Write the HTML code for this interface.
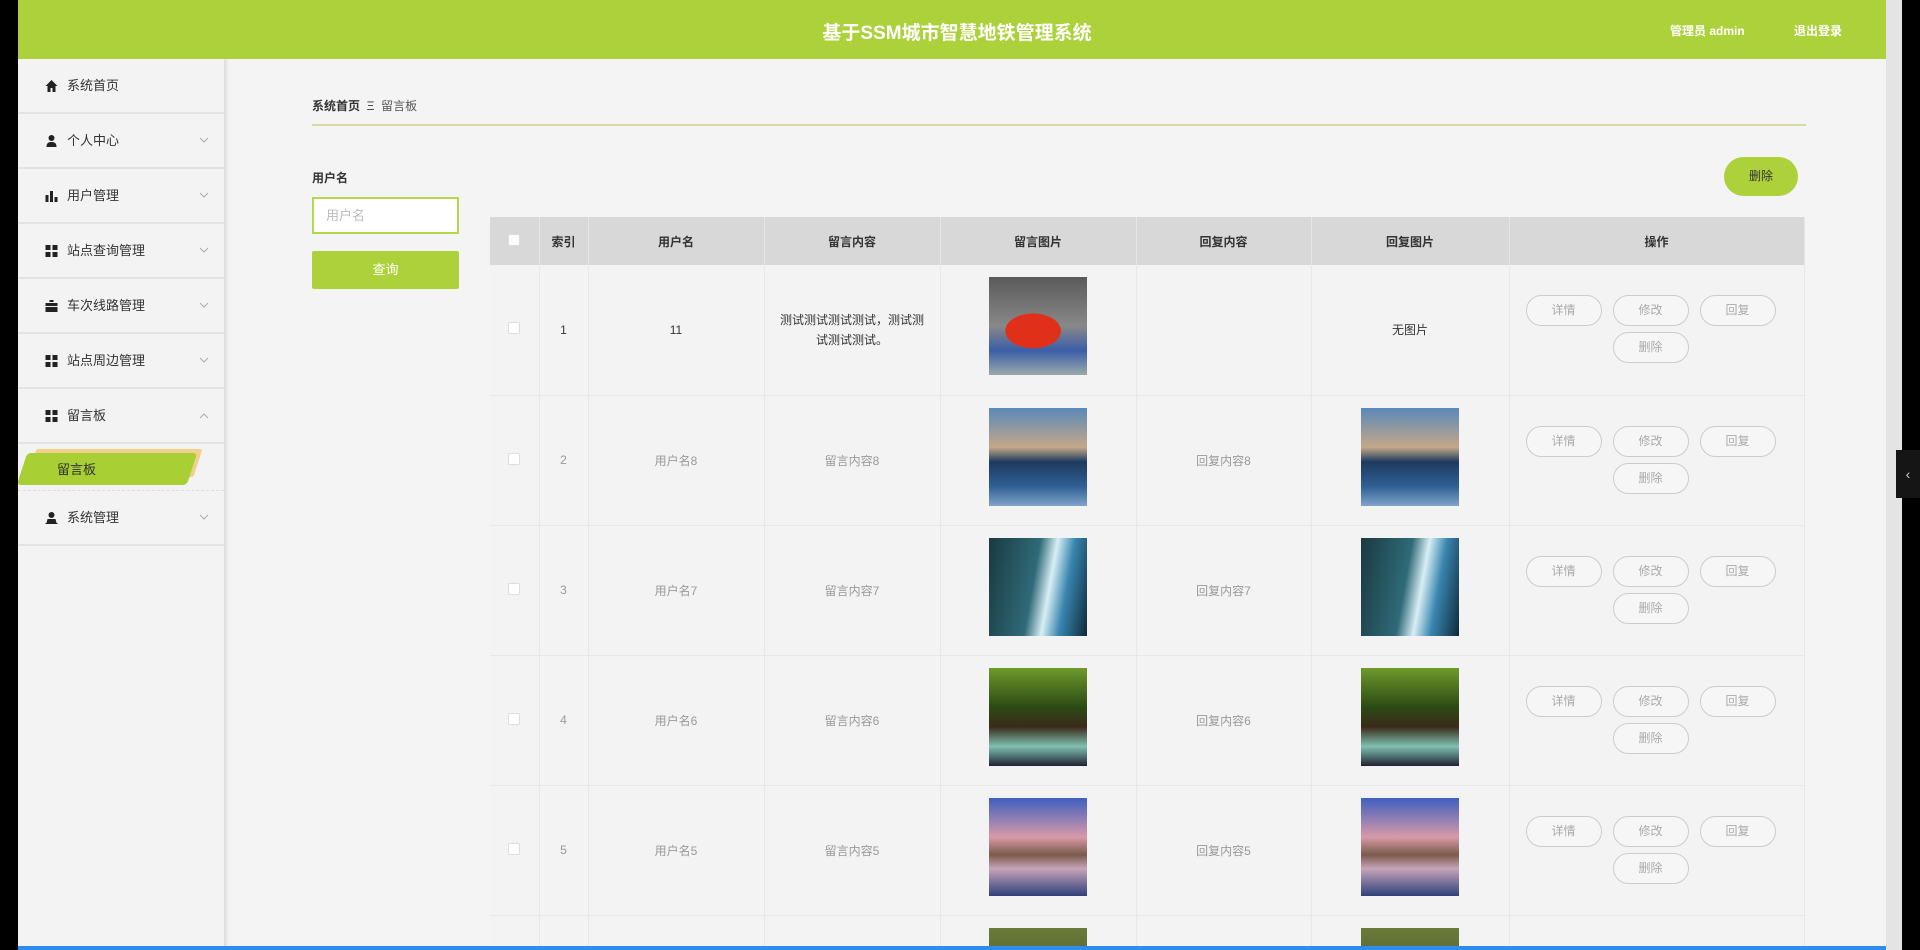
<!DOCTYPE html>
<html><head><meta charset="utf-8"><style>
*{margin:0;padding:0;box-sizing:border-box}
body{width:1920px;height:950px;overflow:hidden;background:#000;font-family:"Liberation Sans","Noto Sans CJK SC",sans-serif;position:relative}
.page{position:absolute;left:18px;top:0;width:1868px;height:950px;background:#f4f4f4;overflow:hidden}
.hd{position:absolute;left:0;top:0;width:1868px;height:59px;background:#acd13a;color:#fff;z-index:2}
.hd .t{position:absolute;left:0;width:1878px;text-align:center;top:18px;font-size:19px;font-weight:bold}
.hd .r{position:absolute;top:22px;font-size:12px;font-weight:bold}
.sb{position:absolute;left:0;top:59px;width:206px;height:891px;background:#f3f3f3;box-shadow:2px 0 4px rgba(0,0,0,.12);z-index:1}
.it{height:55px;border-bottom:2px solid #e3e3e3;position:relative;font-size:13px;color:#333;line-height:53px;padding-left:49px}
.it .ic{position:absolute;left:27px;top:21px;width:13px;height:12px}
.it .ar{position:absolute;left:181px;top:23px;width:10px;height:7px}
.sub{height:47px;position:relative;border-bottom:1px dashed #ddd}
.sub .g{position:absolute;left:4px;top:9px;width:170px;height:32px;background:#a8cf34;transform:skewX(-18deg);border-radius:4px;box-shadow:6px -6px 0 -2px #f1d08a}
.sub span{position:absolute;left:39px;top:15px;font-size:13px;color:#333}
.bc{position:absolute;left:294px;top:97px;font-size:12px;color:#333}
.line{position:absolute;left:294px;top:124px;width:1494px;height:2px;background:#d6dba0}
.lab{position:absolute;left:294px;top:169px;font-size:12px;color:#333;font-weight:bold}
.inp{position:absolute;left:294px;top:197px;width:147px;height:37px;border:2px solid #b4d84a;background:#fff;color:#bbb;font-size:13px;line-height:33px;padding-left:12px}
.btn{position:absolute;left:294px;top:251px;width:147px;height:38px;background:#acd13a;color:#fff;font-size:13px;text-align:center;line-height:38px;border-radius:2px}
.del{position:absolute;left:1706px;top:157px;width:74px;height:39px;background:#acd13a;border-radius:20px;color:#333;font-size:12px;text-align:center;line-height:39px}
table{position:absolute;left:472px;top:217px;border-collapse:collapse;width:1314px;table-layout:fixed}
th{height:48px;background:#d8d8d8;font-size:12px;font-weight:bold;color:#333;border-right:1px solid #e6e6e6}
td{height:130px;border-right:1px solid #e8e8e8;border-bottom:1px solid #e8e8e8;text-align:center;font-size:12px;color:#999;background:#f3f3f3;vertical-align:middle}
td.im{vertical-align:top;padding-top:12px}
tr.r1 td{color:#333}
.cb{display:inline-block;width:12px;height:12px;border:1px solid #ddd;background:#fff;border-radius:2px}
.img{display:inline-block;width:98px;height:98px;vertical-align:top}
.ops{position:relative;height:129px}
.ob{position:absolute;width:76px;height:31px;border:1px solid #ccc;border-radius:16px;color:#aaa;font-size:12px;line-height:29px;text-align:center;background:#f6f6f6}
.sc{position:absolute;left:1886px;top:0;width:16px;height:950px;background:#e4e4e4}
.th{position:absolute;left:1888px;top:17px;width:12px;height:582px;background:#b3b3b3}
.tab{position:absolute;left:1896px;top:450px;width:24px;height:48px;background:#151515;color:#ccc;font-size:14px;text-align:center;line-height:48px}
.blue{position:absolute;left:0;top:946px;width:1886px;height:4px;background:#2d8cf0;z-index:3}
</style></head><body>
<div class="page">
<div class="hd"><div class="t">基于SSM城市智慧地铁管理系统</div><div class="r" style="left:1652px">管理员 admin</div><div class="r" style="left:1776px">退出登录</div></div>
<div class="sb">
<div class="it"><svg class="ic" viewBox="0 0 12 12"><path d="M6 0L0 6h2v6h3V8h2v4h3V6h2z" fill="#222"/></svg>系统首页</div>
<div class="it"><svg class="ic" viewBox="0 0 12 12"><circle cx="6" cy="3" r="3" fill="#222"/><path d="M1 12c0-4 2-5 5-5s5 1 5 5z" fill="#222"/></svg>个人中心<svg class="ar" viewBox="0 0 10 7"><path d="M1 1l4 4 4-4" fill="none" stroke="#aaa"/></svg></div>
<div class="it"><svg class="ic" viewBox="0 0 12 12"><path d="M0 5h3v7H0zM4.5 1h3v11h-3zM9 7h3v5H9z" fill="#222"/></svg>用户管理<svg class="ar" viewBox="0 0 10 7"><path d="M1 1l4 4 4-4" fill="none" stroke="#aaa"/></svg></div>
<div class="it"><svg class="ic" viewBox="0 0 12 12"><path d="M0 0h5v5H0zM7 0h5v5H7zM0 7h5v5H0zM7 7h5v5H7z" fill="#222"/></svg>站点查询管理<svg class="ar" viewBox="0 0 10 7"><path d="M1 1l4 4 4-4" fill="none" stroke="#aaa"/></svg></div>
<div class="it"><svg class="ic" viewBox="0 0 12 12"><path d="M4 0h4v2H4zM0 3h12v3H0zM0 7h12v5H0z" fill="#222"/></svg>车次线路管理<svg class="ar" viewBox="0 0 10 7"><path d="M1 1l4 4 4-4" fill="none" stroke="#aaa"/></svg></div>
<div class="it"><svg class="ic" viewBox="0 0 12 12"><path d="M0 0h5v5H0zM7 0h5v5H7zM0 7h5v5H0zM7 7h5v5H7z" fill="#222"/></svg>站点周边管理<svg class="ar" viewBox="0 0 10 7"><path d="M1 1l4 4 4-4" fill="none" stroke="#aaa"/></svg></div>
<div class="it"><svg class="ic" viewBox="0 0 12 12"><path d="M0 0h5v5H0zM7 0h5v5H7zM0 7h5v5H0zM7 7h5v5H7z" fill="#222"/></svg>留言板<svg class="ar" viewBox="0 0 10 7"><path d="M1 6l4-4 4 4" fill="none" stroke="#aaa"/></svg></div>
<div class="sub"><div class="g"></div><span>留言板</span></div>
<div class="it"><svg class="ic" viewBox="0 0 12 12"><circle cx="6" cy="3" r="3" fill="#222"/><path d="M2 7h8l1 4H1zM0 11h12v1H0z" fill="#222"/></svg>系统管理<svg class="ar" viewBox="0 0 10 7"><path d="M1 1l4 4 4-4" fill="none" stroke="#aaa"/></svg></div>
</div>
<div class="bc"><b>系统首页</b> &nbsp;Ξ&nbsp; <span style="color:#555">留言板</span></div>
<div class="line"></div>
<div class="lab">用户名</div>
<div class="inp">用户名</div>
<div class="btn">查询</div>
<div class="del">删除</div>
<table>
<colgroup><col style="width:49px"><col style="width:49px"><col style="width:176px"><col style="width:176px"><col style="width:196px"><col style="width:175px"><col style="width:198px"><col style="width:295px"></colgroup>
<tr><th><span class="cb"></span></th><th>索引</th><th>用户名</th><th>留言内容</th><th>留言图片</th><th>回复内容</th><th>回复图片</th><th>操作</th></tr>
<tr class="r1"><td><span class="cb"></span></td><td>1</td><td>11</td><td style="line-height:20px;padding:0 10px">测试测试测试测试，测试测试测试测试。</td><td class="im"><span class="img" style="background:radial-gradient(ellipse 40% 25% at 45% 55%,#e0301a 70%,transparent 72%),linear-gradient(180deg,#5a5a5a 0,#888 50%,#3b5ea8 75%,#9aa 100%)"></span></td><td></td><td>无图片</td><td><div class="ops"><div class="ob" style="left:16px;top:30px">详情</div><div class="ob" style="left:103px;top:30px">修改</div><div class="ob" style="left:190px;top:30px">回复</div><div class="ob" style="left:103px;top:67px">删除</div></div></td></tr>
<tr><td><span class="cb"></span></td><td>2</td><td>用户名8</td><td>留言内容8</td><td class="im"><span class="img" style="background:linear-gradient(180deg,#5b88b8 0,#c4a88a 40%,#1d3a5e 55%,#2f5f94 80%,#7fa4c8 100%)"></span></td><td>回复内容8</td><td class="im"><span class="img" style="background:linear-gradient(180deg,#5b88b8 0,#c4a88a 40%,#1d3a5e 55%,#2f5f94 80%,#7fa4c8 100%)"></span></td><td><div class="ops"><div class="ob" style="left:16px;top:30px">详情</div><div class="ob" style="left:103px;top:30px">修改</div><div class="ob" style="left:190px;top:30px">回复</div><div class="ob" style="left:103px;top:67px">删除</div></div></td></tr>
<tr><td><span class="cb"></span></td><td>3</td><td>用户名7</td><td>留言内容7</td><td class="im"><span class="img" style="background:linear-gradient(100deg,#1a3a40 0,#2f6a78 45%,#d8eef5 60%,#3a86b0 75%,#0d2a3a 100%)"></span></td><td>回复内容7</td><td class="im"><span class="img" style="background:linear-gradient(100deg,#1a3a40 0,#2f6a78 45%,#d8eef5 60%,#3a86b0 75%,#0d2a3a 100%)"></span></td><td><div class="ops"><div class="ob" style="left:16px;top:30px">详情</div><div class="ob" style="left:103px;top:30px">修改</div><div class="ob" style="left:190px;top:30px">回复</div><div class="ob" style="left:103px;top:67px">删除</div></div></td></tr>
<tr><td><span class="cb"></span></td><td>4</td><td>用户名6</td><td>留言内容6</td><td class="im"><span class="img" style="background:linear-gradient(180deg,#6e9a2a 0,#2c4a14 40%,#3a2a1a 60%,#7fc0b0 80%,#223 100%)"></span></td><td>回复内容6</td><td class="im"><span class="img" style="background:linear-gradient(180deg,#6e9a2a 0,#2c4a14 40%,#3a2a1a 60%,#7fc0b0 80%,#223 100%)"></span></td><td><div class="ops"><div class="ob" style="left:16px;top:30px">详情</div><div class="ob" style="left:103px;top:30px">修改</div><div class="ob" style="left:190px;top:30px">回复</div><div class="ob" style="left:103px;top:67px">删除</div></div></td></tr>
<tr><td><span class="cb"></span></td><td>5</td><td>用户名5</td><td>留言内容5</td><td class="im"><span class="img" style="background:linear-gradient(180deg,#3f5fc0 0,#d89aa8 40%,#7a5a4a 58%,#c6a4b8 72%,#30407a 100%)"></span></td><td>回复内容5</td><td class="im"><span class="img" style="background:linear-gradient(180deg,#3f5fc0 0,#d89aa8 40%,#7a5a4a 58%,#c6a4b8 72%,#30407a 100%)"></span></td><td><div class="ops"><div class="ob" style="left:16px;top:30px">详情</div><div class="ob" style="left:103px;top:30px">修改</div><div class="ob" style="left:190px;top:30px">回复</div><div class="ob" style="left:103px;top:67px">删除</div></div></td></tr>
<tr><td><span class="cb"></span></td><td>6</td><td>用户名4</td><td>留言内容4</td><td class="im"><span class="img" style="background:linear-gradient(180deg,#6a7a3a,#3a4a20)"></span></td><td>回复内容4</td><td class="im"><span class="img" style="background:linear-gradient(180deg,#6a7a3a,#3a4a20)"></span></td><td><div class="ops"><div class="ob" style="left:16px;top:30px">详情</div><div class="ob" style="left:103px;top:30px">修改</div><div class="ob" style="left:190px;top:30px">回复</div></div></td></tr>
</table>
<div class="blue"></div>
</div>
<div class="sc"><div class="th"></div></div>
<div class="tab">‹</div>
</body></html>
